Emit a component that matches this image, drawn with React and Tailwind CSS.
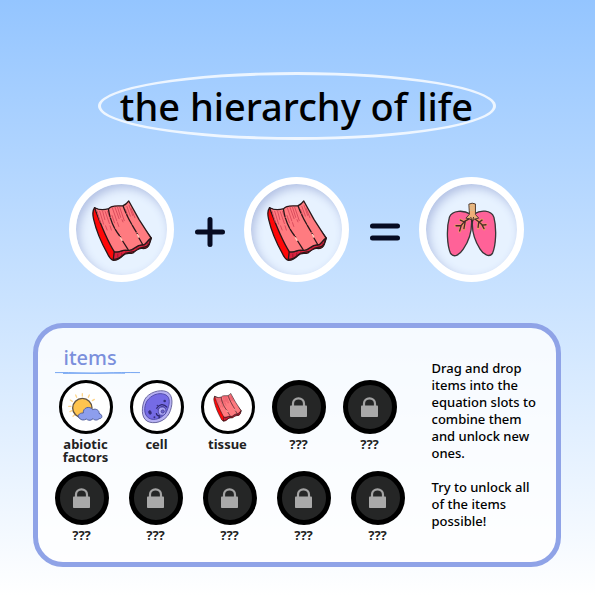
import React from 'react';

function Tissue({ className }) {
  return (
    <svg viewBox="92 78 192 198" className={className} aria-hidden="true" strokeLinejoin="round" strokeLinecap="round">
      <path d="M103 108C95 118 97 130 100 143C108 178 125 218 143 250Q149 266 161 271C175 272 185 262 191 256C200 246 211 252 222 248Q238 233 250 234Q268 237 273 220L279 202L262 180Z" fill="#ff0808" stroke="#29181a" strokeWidth="4" />
      <path d="M161 268L164 244C188 249 185 235 207 240C225 244 231 220 252 223C263 223 267 207 278 202L272 220C264 236 248 227 237 237C218 253 204 240 190 255Q177 268 161 268Z" fill="#d9213d" stroke="#29181a" strokeWidth="4" />
      <path d="M103 108C121 118 137 114 147 111C155 99 173 103 190 102Q201 99 209 87L241 145L278 202C267 207 263 223 252 223C231 220 225 244 207 240C185 235 188 249 164 244C145 214 121 157 103 108Z" fill="#ff7b80" stroke="#29181a" strokeWidth="4" />
      <g fill="none" stroke="#d94b5d" strokeWidth="3">
        <path d="M111 119l10 34M119 119l12 40M128 119l7 26M136 120l13 37M143 119l8 22M137 164l5 13M151 164l4 13" />
        <path d="M158 108l14 41M166 106l13 36M174 106l10 32M181 107l14 41M157 132l8 23M174 154l4 12M188 145l3 7" />
        <path d="M203 104l11 30M210 101l11 31M216 110l12 29M199 113l7 20" />
      </g>
      <path d="M146 113C151 143 161 172 184 199M192 104C202 132 217 159 237 191" fill="none" stroke="#29181a" strokeWidth="4" strokeDasharray="23 5 34 4" />
      <path d="M190 211L207 238M240 201L252 222" fill="none" stroke="#29181a" strokeWidth="4" />
      <path d="M183 201l5 8M236 191l4 8" stroke="#ffd0bd" strokeWidth="4" />
      <path d="M175 252v9M187 249v6M200 244v5M219 242v4M235 233v4M257 225v4M267 216v5" stroke="#7c1427" strokeWidth="2" />
    </svg>
  );
}

function Lungs({ className }) {
  return (
    <svg viewBox="108 86 154 170" className={className} aria-hidden="true" strokeLinecap="round" strokeLinejoin="round">
      <g fill="#ff6298" stroke="#383638" strokeWidth="4">
        <path d="M180 122C163 111 126 109 118 132C108 167 111 217 121 241C132 259 151 243 160 229C180 200 187 166 185 137Z" />
        <path d="M194 122C211 110 244 109 253 132C262 167 259 217 249 241C240 257 220 244 211 229C190 195 185 162 189 137Z" />
      </g>
      <g fill="none">
        <path d="M186 132L165 144L153 158L137 158M162 146L151 140M154 157L149 175M165 145L162 168M188 132L207 145L218 156L229 155M207 145L205 165M216 154L223 168M209 145L217 140" stroke="#efa05f" strokeWidth="8" />
        <path d="M183 134L164 145L153 158L138 158M162 146L151 141M154 157L149 174M166 145L162 167M190 134L207 146L218 156L229 155M207 146L205 163M216 154L223 167M210 146L217 141" stroke="#4a262c" strokeWidth="4" />
      </g>
      <path d="M178 92Q187 87 197 92V124L207 135L194 138L187 144L180 137L168 135L178 124Z" fill="#efb078" stroke="#4c3c31" strokeWidth="3" />
      <path d="M181 97h12M181 104h12M181 111h12" stroke="#d8bd8b" strokeWidth="3" />
      <path d="M183 133l4 14 4-14" fill="none" stroke="#382629" strokeWidth="3" />
    </svg>
  );
}

function SunCloud() {
  return (
    <svg viewBox="112 228 108 90" className="h-[30px] w-9" aria-hidden="true">
      <path d="M155 240v-7M138 244l-3-7M173 244l3-7M125 256l-6-4M185 254l6-4M121 271h-7M124 284l-6 3M132 296l-5 5" stroke="#ffd68b" strokeWidth="4" strokeLinecap="round" />
      <circle cx="155" cy="276" r="29" fill="#ffc44f" stroke="#615344" strokeWidth="4" />
      <path d="M148 308C137 301 145 290 158 291C156 275 177 268 186 281C196 276 207 284 205 292C217 296 216 309 205 308C199 315 190 312 187 308C179 316 170 312 167 309C159 314 152 312 148 308Z" fill="#8d9eed" stroke="#52609e" strokeWidth="3" />
    </svg>
  );
}

function Cell() {
  return (
    <svg viewBox="336 224 100 110" className="h-9 w-8" aria-hidden="true">
      <path d="M348 255C359 235 393 222 416 231C439 241 435 277 424 299C411 325 376 335 355 323C335 311 338 276 348 255Z" fill="#b7b1f3" stroke="#65629b" strokeWidth="3" />
      <path d="M354 261C367 242 391 232 411 240C431 248 425 274 416 293C403 316 376 323 361 314C344 304 345 279 354 261Z" fill="#756be5" stroke="#4e48a8" strokeWidth="3" />
      <ellipse cx="364" cy="296" rx="4" ry="6" fill="#342d78" stroke="#342d78" strokeWidth="2" transform="rotate(-20 364 296)" />
      <path d="M384 284Q400 261 418 280M389 289Q401 270 413 285M384 298Q384 308 397 307" fill="none" stroke="#302970" strokeWidth="4" />
      <ellipse cx="402" cy="292" rx="12" ry="13" fill="#aaa5f4" stroke="#514aa8" strokeWidth="3" />
      <circle cx="404" cy="293" r="5" fill="#6a61d0" stroke="#37307d" strokeWidth="2" />
      <g fill="#342d78"><circle cx="410" cy="260" r="4" /><circle cx="378" cy="311" r="3" /><circle cx="393" cy="311" r="3" /><circle cx="387" cy="274" r="2" /></g>
    </svg>
  );
}

function Lock() {
  return (
    <svg viewBox="0 0 17 20" className="h-5 w-[17px]" aria-hidden="true">
      <path d="M3 10V6.4a5.5 5.1 0 0 1 11 0V10" fill="none" stroke="#a3a3a3" strokeWidth="2.2" />
      <rect y="8.6" width="17" height="11.4" rx=".8" fill="#a9a9a9" />
    </svg>
  );
}

function Slot({ label, children }) {
  return (
    <div role="img" aria-label={label} className="flex size-[105px] shrink-0 items-center justify-center rounded-full border-[7px] border-white bg-[#e7f2ff] shadow-[inset_3px_4px_10px_#b3c1e4]">
      {children}
    </div>
  );
}

function Operator({ equals }) {
  return (
    <div role="img" aria-label={equals ? 'equals' : 'plus'} className="flex w-[70px] shrink-0 justify-center pt-1 pl-0.5">
      <svg viewBox="0 0 30 30" className="size-[30px]" stroke="#060b22" strokeWidth="5" strokeLinecap="round" aria-hidden="true">
        {equals ? <path d="M2.5 9h25M2.5 21h25" /> : <path d="M2.5 15h25M15 2.5v25" />}
      </svg>
    </div>
  );
}

function Item({ label, children }) {
  return (
    <button type="button" draggable={!!children} disabled={!children} className="flex w-[54px] shrink-0 flex-col items-center gap-1 text-[#222]">
      {children ? (
        <span className="flex size-[54px] items-center justify-center rounded-full border-[3px] border-black bg-white">{children}</span>
      ) : (
        <span className="flex size-[54px] items-center justify-center rounded-full border-[5px] border-black bg-[#252626]"><Lock /></span>
      )}
      <span className="text-[13px] leading-[13px] font-bold">{label || '???'}</span>
    </button>
  );
}

export default function App() {
  return (
    <main className="min-h-screen bg-linear-to-b from-[#94c5ff] to-white pt-18 pr-[34px] pb-7 pl-8 font-['Noto_Sans',sans-serif] text-black">
      <header className="flex justify-center">
        <h1 className="flex h-[68px] w-full max-w-[398px] items-center justify-center rounded-[50%] border-3 border-white/80 text-[38px] leading-10 font-medium whitespace-nowrap">
          the hierarchy of life
        </h1>
      </header>

      <section aria-label="Equation" className="mt-[37px] flex items-center justify-center">
        <Slot label="tissue"><Tissue className="h-16 w-[62px]" /></Slot>
        <Operator />
        <Slot label="tissue"><Tissue className="h-16 w-[62px]" /></Slot>
        <Operator equals />
        <Slot label="lungs"><Lungs className="h-14 w-[51px]" /></Slot>
      </section>

      <section aria-labelledby="items-title" className="mx-auto mt-[41px] flex max-w-[528px] justify-between rounded-[30px] border-5 border-[#8fa3e7] bg-white/80 pt-4 pr-4 pb-5 pl-[17px]">
        <div className="w-[350px] shrink-0">
          <h2 id="items-title" className="pl-[9px] text-[20px] leading-7 font-medium text-[#7b8fdc]">items</h2>
          <svg viewBox="0 0 86 2" className="h-0.5 w-[86px]" fill="none" stroke="#76a6f2" aria-hidden="true">
            <path d="M0 .6Q14 .4 27 1T52 1T85 .6M8 1.4L31 1.2L55 1L70 1.2" strokeWidth="1" />
          </svg>
          <div className="mt-1.5 flex justify-between pr-2 pl-1">
            <Item label="abiotic factors"><SunCloud /></Item>
            <Item label="cell"><Cell /></Item>
            <Item label="tissue"><Tissue className="h-[30px] w-[29px]" /></Item>
            <Item />
            <Item />
          </div>
          <div className="mt-[7px] flex justify-between">
            <Item />
            <Item />
            <Item />
            <Item />
            <Item />
          </div>
        </div>
        <div className="w-[108px] space-y-[17px] pt-4 text-[13px] leading-[17px] font-medium">
          <p>Drag and drop items into the equation slots to combine them and unlock new ones.</p>
          <p>Try to unlock all of the items possible!</p>
        </div>
      </section>
    </main>
  );
}
